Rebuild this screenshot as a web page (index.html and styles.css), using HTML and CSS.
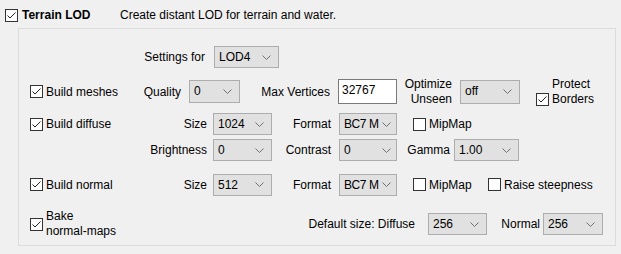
FILE: index.html
```html
<!DOCTYPE html>
<html lang="en">

<head>
  <meta charset="UTF-8">
  <title>Terrain LOD</title>
  <link rel="stylesheet" href="styles.css">
</head>

<body>

  <div class="title-row">
    <span class="cb checked"></span>
    <span class="title">Terrain LOD</span>
    <span class="desc">Create distant LOD for terrain and water.</span>
  </div>

  <div class="group">

    <div class="row row-settings">
      <span class="lbl lbl-settings">Settings for</span>
      <div class="combo w-lod">LOD4</div>
    </div>

    <div class="row row1">
      <div class="chk chk-short"><span class="cb checked"></span><span>Build meshes</span></div>
      <span class="lbl lbl-quality">Quality</span>
      <div class="combo w-quality">0</div>
      <span class="lbl lbl-maxv">Max Vertices</span>
      <div class="edit">32767</div>
      <span class="lbl lbl-opt"><span>Optimize<br>Unseen</span></span>
      <div class="combo w-off">off</div>
      <div class="chk chk-protect"><span class="cb checked"></span><span class="two">Protect<br>Borders</span></div>
    </div>

    <div class="row row2">
      <div class="chk"><span class="cb checked"></span><span>Build diffuse</span></div>
      <span class="lbl lbl-a">Size</span>
      <div class="combo w-size">1024</div>
      <span class="lbl lbl-b">Format</span>
      <div class="combo w-format">BC7 M</div>
      <div class="chk chk-mip"><span class="cb"></span><span>MipMap</span></div>
    </div>

    <div class="row row3">
      <div class="chk"></div>
      <span class="lbl lbl-a">Brightness</span>
      <div class="combo w-size">0</div>
      <span class="lbl lbl-b">Contrast</span>
      <div class="combo w-format">0</div>
      <span class="lbl lbl-gamma">Gamma</span>
      <div class="combo w-gamma">1.00</div>
    </div>

    <div class="row row4">
      <div class="chk"><span class="cb checked"></span><span>Build normal</span></div>
      <span class="lbl lbl-a">Size</span>
      <div class="combo w-size">512</div>
      <span class="lbl lbl-b">Format</span>
      <div class="combo w-format">BC7 M</div>
      <div class="chk chk-mip"><span class="cb"></span><span>MipMap</span></div>
      <div class="chk chk-auto"><span class="cb"></span><span>Raise steepness</span></div>
    </div>

    <div class="row row5">
      <div class="chk"><span class="cb checked"></span><span class="two">Bake<br>normal-maps</span></div>
      <span class="lbl lbl-default">Default size: Diffuse</span>
      <div class="combo w-size">256</div>
      <span class="lbl lbl-normal">Normal</span>
      <div class="combo w-normal">256</div>
    </div>

  </div>

</body>

</html>
```

FILE: styles.css
```css
body {
  margin: 0;
  background: #f0f0f0;
  font-family: "Liberation Sans", Arial, sans-serif;
  font-size: 12px;
  color: #000;
}

.title-row {
  height: 28px;
  padding-top: 2px;
  box-sizing: border-box;
  display: flex;
  align-items: center;
  padding-left: 5px;
  white-space: nowrap;
}

.title {
  font-weight: bold;
  margin-left: 4px;
  width: 98px;
}

.group {
  margin-left: 18px;
  width: 598px;
  height: 218px;
  box-sizing: border-box;
  border: 1px solid #dcdcdc;
  display: flex;
  flex-direction: column;
}

.row {
  display: flex;
  align-items: center;
  white-space: nowrap;
}

.row-settings {
  height: 22px;
  margin-top: 17px;
}

.row1 {
  height: 25px;
  margin-top: 11px;
}

.row2 {
  height: 22px;
  margin-top: 9px;
}

.row3 {
  height: 22px;
  margin-top: 4px;
}

.row4 {
  height: 23px;
  margin-top: 12px;
}

.row5 {
  height: 22px;
  margin-top: 17px;
}

/* checkbox */
.cb {
  width: 13px;
  height: 13px;
  box-sizing: border-box;
  border: 1px solid #333;
  background: #fff;
  flex: none;
}

.cb.checked {
  background: #fff url("data:image/svg+xml;utf8,<svg xmlns='http://www.w3.org/2000/svg' width='11' height='11'><path d='M1.5 5.5 L4 8 L9.5 2.5' fill='none' stroke='%23222' stroke-width='1'/></svg>") no-repeat center;
}

.chk {
  display: flex;
  align-items: center;
  margin-left: 11px;
  width: 120px;
  flex: none;
}

.chk .cb {
  margin-right: 3px;
}

.chk-short {
  width: 110px;
}

.chk-protect {
  margin-left: 16px;
  width: auto;
  align-items: flex-end;
}

.chk-protect .cb {
  margin-bottom: 1px;
}

.chk-mip {
  margin-left: 16px;
  width: 64px;
}

.chk-auto {
  margin-left: 11px;
  width: auto;
}

.two {
  line-height: 15px;
}

/* labels: right aligned, overflow to the left */
.lbl {
  flex: none;
  display: flex;
  justify-content: flex-end;
}

.lbl-settings {
  margin-left: 101px;
  width: 85px;
  margin-right: 9px;
}

.lbl-quality {
  width: 41px;
  margin-right: 8px;
}

.lbl-maxv {
  margin-left: 22px;
  width: 68px;
  margin-right: 8px;
}

.lbl-opt {
  margin-left: 8px;
  width: 47px;
  margin-right: 8px;
  line-height: 15px;
  text-align: right;
}

.lbl-a {
  width: 57px;
  margin-right: 6px;
}

.lbl-b {
  width: 59px;
  margin-right: 8px;
}

.lbl-gamma {
  margin-left: 16px;
  width: 37px;
  margin-right: 4px;
}

.lbl-default {
  width: 265px;
  margin-right: 13px;
}

.lbl-normal {
  margin-left: 13px;
  width: 40px;
  margin-right: 3px;
}

/* combo boxes */
.combo {
  flex: none;
  height: 22px;
  box-sizing: border-box;
  border: 1px solid #adadad;
  background: #e1e1e1 url("data:image/svg+xml;utf8,<svg xmlns='http://www.w3.org/2000/svg' width='9' height='5'><path d='M0.5 0.5 L4.5 4.5 L8.5 0.5' fill='none' stroke='%23707070' stroke-width='1'/></svg>") no-repeat right 7px center;
  padding-left: 4px;
  line-height: 20px;
}

.w-lod {
  width: 65px;
}

.w-quality {
  width: 51px;
  height: 23px;
}

.w-off {
  width: 60px;
  height: 24px;
}

.w-size {
  width: 59px;
}

.w-format {
  width: 58px;
  background-position: right 5px center;
  letter-spacing: -0.4px;
}

.w-gamma {
  width: 65px;
}

.w-normal {
  width: 60px;
}

.edit {
  flex: none;
  width: 59px;
  height: 25px;
  box-sizing: border-box;
  border: 1px solid #7a7a7a;
  background: #fff;
  padding-left: 3px;
  line-height: 21px;
}
```
